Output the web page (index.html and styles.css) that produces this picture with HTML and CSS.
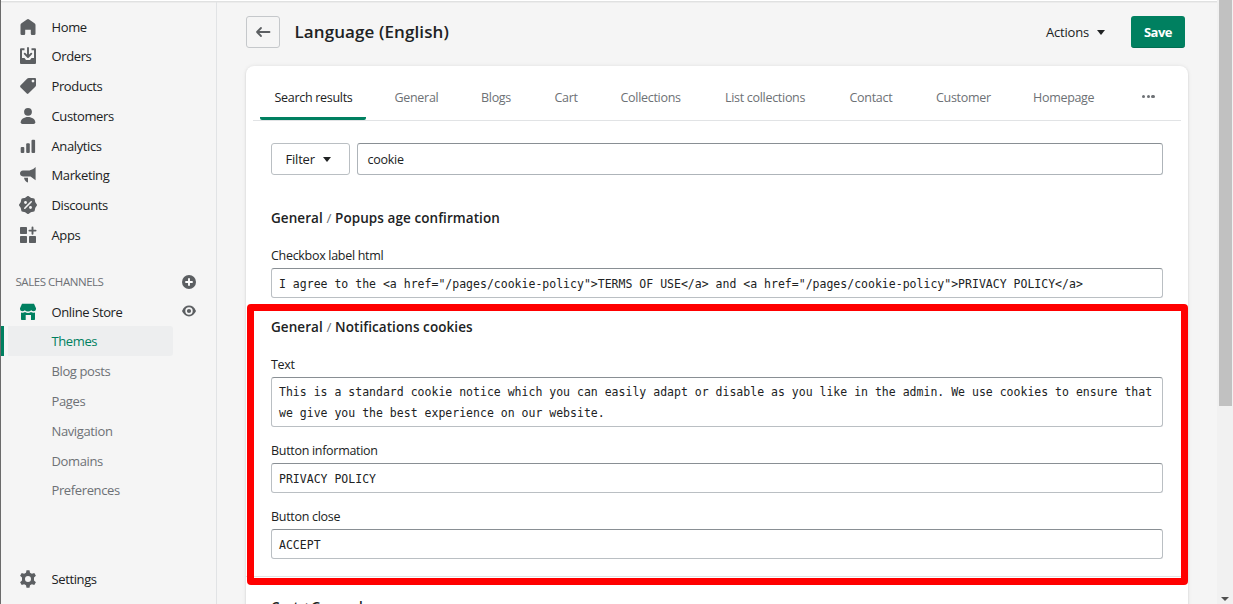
FILE: index.html
```html
<!DOCTYPE html>
<html lang="en">
<head>
<meta charset="utf-8">
<title>Language (English)</title>
<link rel="stylesheet" href="styles.css">
</head>
<body>
<div class="app">
  <aside class="sidebar">
    <nav class="nav">
      <a class="nav-item"><svg class="icon" viewBox="0 0 18 18"><path d="M9 1Q9.600 1 10.100 1.400L15.500 5.300Q16.500 6 16.500 7V15.700Q16.500 17 15.200 17H13Q11.800 17 11.800 15.800V11.800H6.200V15.800Q6.200 17 5 17H2.800Q1.500 17 1.500 15.700V7Q1.500 6 2.500 5.300L7.900 1.400Q8.400 1 9 1Z"/></svg><span>Home</span></a>
      <a class="nav-item orders"><svg class="icon" viewBox="0 0 18 18"><path d="M2 1.300H5.500V3.200H3V11H5.500L7 13H11L12.500 11H15V3.200H12.500V1.300H16Q17 1.300 17 2.300V16Q17 17 16 17H2Q1 17 1 16V2.300Q1 1.300 2 1.300Z"/><path class="line" d="M9 1V9.500M5.700 6.700L9 10L12.300 6.700"/></svg><span>Orders</span></a>
      <a class="nav-item"><svg class="icon" viewBox="0 0 18 18"><path fill-rule="evenodd" d="M9.700 1H16Q17 1 17 2V8.200Q17 9 16.300 9.700L9.400 16.600Q8.600 17.300 7.800 16.600L1.400 10.200Q.7 9.400 1.400 8.600L8.300 1.600Q9 1 9.700 1ZM14 2.700A1.400 1.400 0 1 0 14 5.500A1.400 1.400 0 1 0 14 2.700Z"/></svg><span>Products</span></a>
      <a class="nav-item"><svg class="icon" viewBox="0 0 18 18"><circle cx="9" cy="4.800" r="3.900"/><path d="M9 10C13 10 16.300 12.500 16.300 15.200Q16.300 17 14.600 17H3.400Q1.700 17 1.700 15.200C1.700 12.500 5 10 9 10Z"/></svg><span>Customers</span></a>
      <a class="nav-item"><svg class="icon" viewBox="0 0 18 18"><rect x="1.700" y="10" width="3.600" height="6" rx="1"/><rect x="7.200" y="6.300" width="3.600" height="9.700" rx="1"/><rect x="12.500" y="2.700" width="3.600" height="13.300" rx="1"/></svg><span>Analytics</span></a>
      <a class="nav-item"><svg class="icon" viewBox="0 0 18 18"><path d="M16.600 1V14.200L11.500 10.500H4Q1 10 1 7.600Q1 5 4 4.600H10.500Q14 4 16.600 1Z"/><path d="M5 11.700H9V16.400Q6 16 5 11.700Z"/></svg><span>Marketing</span></a>
      <a class="nav-item"><svg class="icon" viewBox="0 0 18 18"><path d="M9 .7L11.500 2.400L14.900 3.100L15.600 6.500L17.300 9L15.600 11.500L14.900 14.900L11.500 15.600L9 17.300L6.500 15.600L3.100 14.900L2.400 11.500L.7 9L2.400 6.500L3.100 3.100L6.500 2.400Z" stroke="#5c5f62" stroke-width="1.400" stroke-linejoin="round"/><path class="cut" d="M5.800 12.200L12.200 5.800"/><circle class="dot" cx="6.500" cy="6.500" r="1.400"/><circle class="dot" cx="11.500" cy="11.500" r="1.400"/></svg><span>Discounts</span></a>
      <a class="nav-item"><svg class="icon" viewBox="0 0 18 18"><rect x="1" y="1" width="7" height="7" rx=".7"/><rect x="1" y="10" width="7" height="7" rx=".7"/><rect x="10" y="10" width="7" height="7" rx=".7"/><path class="line" d="M13.500 1.500V7.700M10.400 4.600H16.600"/></svg><span>Apps</span></a>
    </nav>
    <div class="channels-title"><span>SALES CHANNELS</span><svg class="mini" viewBox="0 0 14 14"><circle cx="7" cy="7" r="7"/><path class="cross" d="M7 3.300V10.700M3.300 7H10.700"/></svg></div>
    <a class="nav-item store"><svg class="icon green" viewBox="0 0 18 18"><path d="M3 .8H15L17 5.200V6.200Q16.700 8.200 14.700 8.200Q13.200 8.200 12.200 7.200Q10.800 8.600 9 8.600Q7.200 8.600 5.800 7.200Q4.800 8.200 3.300 8.200Q1.300 8.200 1 6.200V5.200Z"/><path d="M2 9.500Q4.500 10.300 6 9Q9 10.800 12 9Q13.500 10.300 16 9.500V16.300Q16 17 15.300 17H12V12H6.700V17H2.700Q2 17 2 16.300Z"/></svg><span>Online Store</span><svg class="mini eye" viewBox="0 0 14 14"><path d="M0 7Q2.500 1.600 7 1.600T14 7Q11.500 12.400 7 12.400T0 7Z"/><circle cx="7" cy="7" r="2.900" fill="none" stroke="#f5f5f5" stroke-width="1.600"/></svg></a>
    <div class="subnav">
      <a class="sub active">Themes</a><a class="sub">Blog posts</a><a class="sub">Pages</a><a class="sub">Navigation</a><a class="sub">Domains</a><a class="sub">Preferences</a>
    </div>
    <a class="nav-item settings"><svg class="icon" viewBox="0 0 18 18"><path fill-rule="evenodd" d="M7.500 .3H10.500L11 2.700L12.900 3.800L15.300 3L16.900 5.700L15 7.400V10.600L16.900 12.300L15.300 15L12.900 14.200L11 15.300L10.500 17.700H7.500L7 15.300L5.100 14.200L2.700 15L1.100 12.300L3 10.600V7.400L1.100 5.700L2.700 3L5.100 3.800L7 2.700ZM9 6A3 3 0 1 0 9 12A3 3 0 1 0 9 6Z"/></svg><span>Settings</span></a>
  </aside>
  <main class="main">
    <header class="page-head">
      <button class="back"><svg viewBox="0 0 16 16"><path d="M14.500 8H2M6 4L2 8L6 12"/></svg></button>
      <h1>Language (English)</h1>
      <button class="actions"><span>Actions</span><i class="caret"></i></button>
      <button class="save"><span>Save</span></button>
    </header>
    <section class="card">
      <div class="tabs">
        <a class="tab selected"><span>Search results</span></a><a class="tab">General</a><a class="tab">Blogs</a><a class="tab">Cart</a><a class="tab">Collections</a><a class="tab">List collections</a><a class="tab">Contact</a><a class="tab">Customer</a><a class="tab">Homepage</a><a class="tab more"><i></i><i></i><i></i></a>
      </div>
      <div class="filters">
        <button class="filter"><span>Filter</span><i class="caret"></i></button>
        <div class="search">cookie</div>
      </div>
      <div class="group first">
        <h2>General <em>/</em> Popups age confirmation</h2>
        <label>Checkbox label html</label>
        <div class="field">I agree to the &lt;a href="/pages/cookie-policy"&gt;TERMS OF USE&lt;/a&gt; and &lt;a href="/pages/cookie-policy"&gt;PRIVACY POLICY&lt;/a&gt;</div>
      </div>
      <div class="group second">
        <h2>General <em>/</em> Notifications cookies</h2>
        <label>Text</label>
        <div class="field multiline">This is a standard cookie notice which you can easily adapt or disable as you like in the admin. We use cookies to ensure that<br>we give you the best experience on our website.</div>
        <label>Button information</label>
        <div class="field">PRIVACY POLICY</div>
        <label>Button close</label>
        <div class="field">ACCEPT</div>
      </div>
      <div class="group third"><h2>Cart <em>/</em> General</h2></div>
      <div class="highlight"></div>
    </section>
  </main>
  <div class="scrollbar"><div class="thumb"></div><i class="down"></i></div>
</div>
</body>
</html>
```
FILE: styles.css
```css
* { box-sizing: border-box; }
body { margin: 0; background: #f5f5f5; color: #202223; font: 13px/20px "Open Sans", "Noto Sans", sans-serif; }
button { font: inherit; color: inherit; margin: 0; padding: 0; }
.app { display: flex; width: 1233px; height: 604px; overflow: hidden; border-left: 1px solid #6b6b6b; background: linear-gradient(#fff 0 1px, #e0e1e1 1px 2px, #ececec 2px 3px, #f5f5f5 3px); }
.sidebar { display: flex; flex-direction: column; flex: none; width: 216px; margin-top: 2px; padding: 10.200px 0 10px; border-right: 1px solid #e1e3e5; }
.nav-item { display: flex; flex: none; align-items: center; height: 29.700px; padding-left: 18px; gap: 14.500px; font-size: 13px; font-weight: 500; letter-spacing: -.38px; }
.orders { padding-bottom: 1px; }
.icon { width: 18px; height: 18px; fill: #5c5f62; }
.icon .line { fill: none; stroke: #5c5f62; stroke-width: 1.900; stroke-linecap: round; stroke-linejoin: round; }
.icon .cut { stroke: #f5f5f5; stroke-width: 1.600; stroke-linecap: round; }
.icon .dot { fill: #f5f5f5; }
.icon.green { fill: #008060; }
.channels-title { display: flex; align-items: center; justify-content: space-between; flex: none; height: 30px; margin-top: 17px; padding: 0 20px 0 14.500px; color: #6d7175; font-size: 11.500px; letter-spacing: -.45px; }
.mini { width: 14px; height: 14px; fill: #5c5f62; }
.cross { stroke: #fff; stroke-width: 1.900; }
.store { padding-right: 20px; }
.eye { margin: -2px 0 0 auto; }
.subnav { display: flex; flex-direction: column; padding-right: 43px; }
.sub { height: 29.800px; padding-left: 50.500px; line-height: 31px; color: #6d7175; font-weight: 500; letter-spacing: -.38px; }
.sub.active { color: #008060; background: linear-gradient(90deg, #008060 3px, #f5f5f5 3px 7px, #edeeef 7px); border-radius: 0 3px 3px 0; }
.settings { margin-top: auto; }
.main { flex: none; width: 1000px; padding: 16px 29px 0; }
.page-head { display: flex; align-items: center; width: 939px; height: 32px; }
.back { display: flex; align-items: center; justify-content: center; width: 34px; height: 32px; background: transparent; border: 1px solid #c5c8cb; border-radius: 3px; }
.back svg { width: 16px; height: 16px; fill: none; stroke: #5c5f62; stroke-width: 1.800; stroke-linecap: round; stroke-linejoin: round; }
h1 { margin: 0 auto 0 14.500px; font-size: 17px; line-height: 24px; font-weight: 600; letter-spacing: .1px; }
.actions { display: flex; align-items: center; gap: 8px; margin-right: 26px; background: none; border: 0; font-weight: 500; letter-spacing: -.2px; }
.caret { border: 4px solid transparent; border-top: 5px solid #202223; border-bottom: 0; margin-top: 1px; }
.save { width: 54px; height: 32px; color: #fff; background: #008060; border: 0; border-bottom: 1px solid #006e52; border-radius: 3px; font-weight: 700; letter-spacing: -.5px; }
.card { position: relative; width: 942px; height: 600px; margin-top: 18px; background: #fff; border-radius: 8px; box-shadow: 0 0 4px rgba(23, 24, 24, .08), 0 1px 2px rgba(0, 0, 0, .13); }
.tabs { display: grid; grid-template-columns: 120px 86.500px 73.500px 66px 104.500px 124.500px 86.500px 97px 109px 20px; height: 55px; margin: 0 7px; padding-left: 21.500px; border-bottom: 1px solid #e1e3e5; }
.tab { height: 55px; line-height: 63px; color: #6d7175; font-size: 12.500px; letter-spacing: -.3px; white-space: nowrap; }
.selected { width: 106px; height: 54px; margin-left: -14.500px; padding-left: 14.500px; color: #202223; background: linear-gradient(#008060, #008060) bottom / 100% 3px no-repeat; border-radius: 2px; }
.more { display: flex; gap: 1.500px; padding-top: 29px; }
.more i { width: 3.200px; height: 3.200px; border-radius: 50%; background: #6d7175; }
.filters { display: flex; gap: 7px; margin: 22px 25px 0; }
.filter { display: flex; align-items: center; gap: 8px; width: 79px; height: 32px; padding-left: 13.500px; background: #fff; border: 1px solid #babfc3; border-radius: 3px; font-weight: 500; letter-spacing: -.2px; }
.search { flex: 1; height: 32px; padding-left: 9.500px; line-height: 31px; border: 1px solid #aeb4b9; border-top-color: #898f94; border-radius: 3px; font-size: 12.500px; letter-spacing: -.25px; }
.group { padding: 0 25px; }
.first { padding-top: 32px; height: 132px; }
.second { height: 270px; padding-top: 9px; border-bottom: 1px solid #e1e3e5; }
h2 { margin: 0; font-size: 13.500px; line-height: 22px; font-weight: 600; letter-spacing: .07px; }
h2 em { font-style: normal; font-weight: 400; color: #6d7175; }
label { display: block; height: 20px; margin-top: 16px; padding-top: 1px; font-size: 12.500px; line-height: 20px; letter-spacing: -.3px; }
.field { margin-top: 3px; padding: 5px 7px 2px; border: 1px solid #babfc3; border-top-color: #898f94; border-radius: 3px; font: 11.500px/21px "DejaVu Sans Mono", monospace; letter-spacing: .006px; white-space: nowrap; }
.multiline { padding: 4px 7px 2px; }
.field + label { margin-top: 13px; }
.third { padding-top: 19px; }
.highlight { position: absolute; left: 1px; top: 238px; width: 941px; height: 281px; border: 7px solid #f00; border-radius: 4px; }
.scrollbar { position: relative; flex: none; width: 16px; background: #f1f1f1; }
.thumb { width: 13px; height: 406px; margin-left: 2px; background: #c1c1c1; }
.down { position: absolute; left: 4px; bottom: 3px; border: 4px solid transparent; border-top-color: #505050; border-bottom: 0; }
```
